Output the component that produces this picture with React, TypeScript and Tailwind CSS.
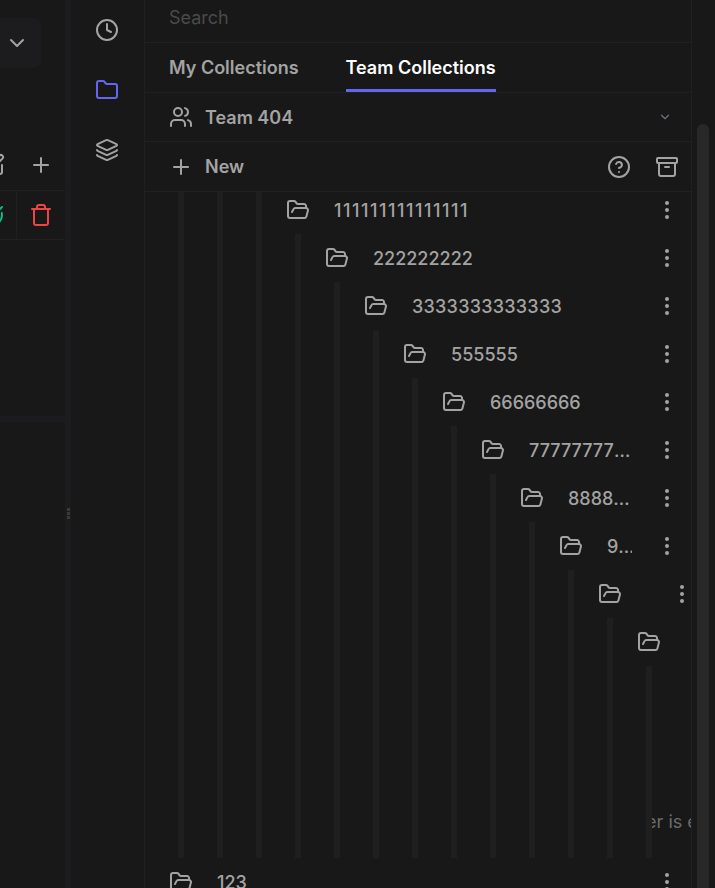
import { Archive, ChevronDown, CircleCheckBig, CircleHelp, Clock, EllipsisVertical, Folder, FolderOpen, Layers, Plus, SquarePen, Trash, Users } from "lucide-react";

const labels = ["", "", "", "111111111111111", "222222222", "3333333333333", "555555", "66666666", "7777777777777777", "88888888888888888", "999999999999", "", ""];

function Row({ label }: { label: string }) {
  // the digits 1 and 3 run wider in the picture than in the installed Inter
  const tracking = label.startsWith("1111") ? "tracking-[1.53px]" : label.startsWith("3333") ? "tracking-[0.25px]" : "";
  return (
    <div className="flex h-12 items-center pl-6 text-[#a3a3a3]">
      <FolderOpen size={24} strokeWidth={2} className="shrink-0" />
      <div className="min-w-0 flex-1 pl-6 pr-3">
        <div className={`mr-[-1px] truncate text-[18px] font-medium ${tracking}`}>{label}</div>
      </div>
      <div className="flex h-12 w-12 shrink-0 items-center justify-center">
        <EllipsisVertical size={24} strokeWidth={2} />
      </div>
    </div>
  );
}

// every collection holds one child, nested 13 levels deep
function Node({ depth }: { depth: number }) {
  const label = labels[depth];
  return (
    <div className="min-w-0">
      {depth > 2 && <Row label={label} />}
      <div className="flex">
        <div className="ml-[33px] w-[6px] shrink-0 bg-[#1f1f1f]" />
        <div className="min-w-0 flex-1">
          {depth < 12 ? (
            <Node depth={depth + 1} />
          ) : (
            <div className="flex h-[192px] items-end justify-center overflow-hidden pb-6 pl-2">
              <span className="whitespace-nowrap text-[18px] leading-6 text-[#6b6b6b]">Folder is empty</span>
            </div>
          )}
        </div>
      </div>
    </div>
  );
}

export default function App() {
  return (
    <div className="flex h-[888px] w-[715px] overflow-hidden bg-[#181818] [font-family:Inter,sans-serif] text-[#a3a3a3]">
      {/* Left pane, mostly cut off */}
      <div className="flex w-[65px] shrink-0 flex-col overflow-hidden">
        <div className="flex h-[142px] shrink-0 justify-end pr-6 pt-[18px]">
          <div className="flex h-[50px] w-[60px] shrink-0 items-center justify-end rounded-r-lg bg-[#1c1c1e] pr-[12px]">
            <ChevronDown size={24} strokeWidth={2} className="text-[#a3a3a3]" />
          </div>
        </div>
        <div className="flex h-[49px] shrink-0 justify-end border-b border-[#202020] pb-[2px]">
          <div className="flex w-12 shrink-0 items-center justify-center">
            <SquarePen size={24} strokeWidth={2} />
          </div>
          <div className="flex w-12 shrink-0 items-center justify-center">
            <Plus size={24} strokeWidth={2} />
          </div>
        </div>
        <div className="flex h-[49px] shrink-0 justify-end border-b border-[#202020]">
          <div className="flex w-[49px] shrink-0 items-center justify-center border-r border-[#202020] text-[#10b981]">
            <CircleCheckBig size={24} strokeWidth={2} />
          </div>
          <div className="flex w-12 shrink-0 items-center justify-center text-[#ef4444]">
            <Trash size={24} strokeWidth={2} />
          </div>
        </div>
        <div className="h-[176px] shrink-0" />
        <div className="h-[6px] shrink-0 bg-[#1c1c1e]" />
      </div>

      {/* Drag handle */}
      <div className="flex w-[6px] shrink-0 flex-col items-center gap-[1px] bg-[#1c1c1e] pt-[508px]">
        <div className="h-[3px] w-[3px] bg-[#3a3a3a]" />
        <div className="h-[3px] w-[3px] bg-[#3a3a3a]" />
        <div className="h-[3px] w-[3px] bg-[#3a3a3a]" />
      </div>

      {/* Icon rail */}
      <div className="flex w-[74px] shrink-0 flex-col items-center border-r border-[#202020] pr-[1px]">
        <div className="flex h-[60px] items-center justify-center">
          <Clock size={24} strokeWidth={2} />
        </div>
        <div className="flex h-[60px] items-center justify-center text-[#6366f1]">
          <Folder size={24} strokeWidth={2} />
        </div>
        <div className="flex h-[60px] items-center justify-center">
          <Layers size={24} strokeWidth={2} />
        </div>
      </div>

      {/* Collections */}
      <div className="flex w-[547px] shrink-0 flex-col overflow-hidden border-r border-[#202020]">
        <div className="relative z-10 shrink-0 bg-[#181818]">
          <div className="flex h-[43px] items-center border-b border-[#202020] pb-2 pl-6 text-[18px] text-[#4a4a4a]">Search</div>
          <div className="flex h-[50px] items-end gap-[47px] border-b border-[#202020] pl-6 text-[18px] font-semibold">
            <div className="flex h-[49px] items-center border-b-[3px] border-transparent pt-[2px]">My Collections</div>
            <div className="flex h-[49px] items-center border-b-[3px] border-[#6366f1] pt-[2px] text-white">Team Collections</div>
          </div>
          <div className="flex h-[49px] items-center border-b border-[#202020] pl-6 pr-[19px]">
            <Users size={24} strokeWidth={2} className="shrink-0" />
            <div className="flex-1 pl-3 text-[18px] font-semibold">Team 404</div>
            <ChevronDown size={14} strokeWidth={2} className="text-[#6b7280]" />
          </div>
          <div className="flex h-[50px] items-center border-b border-[#202020] pl-6">
            <Plus size={24} strokeWidth={2} className="shrink-0" />
            <div className="flex-1 pl-3 text-[18px] font-semibold">New</div>
            <div className="flex w-12 items-center justify-center">
              <CircleHelp size={24} strokeWidth={2} />
            </div>
            <div className="flex w-12 items-center justify-center">
              <Archive size={24} strokeWidth={2} />
            </div>
          </div>
        </div>
        <div className="mt-[-6px] min-h-0 flex-1">
          <Node depth={0} />
          <Row label="123" />
        </div>
      </div>

      {/* Scrollbar */}
      <div className="flex w-[23px] shrink-0 flex-col pl-[5px] pr-[6px] pt-[124px]">
        <div className="flex-1 rounded-t-md bg-[#282828]" />
      </div>
    </div>
  );
}
